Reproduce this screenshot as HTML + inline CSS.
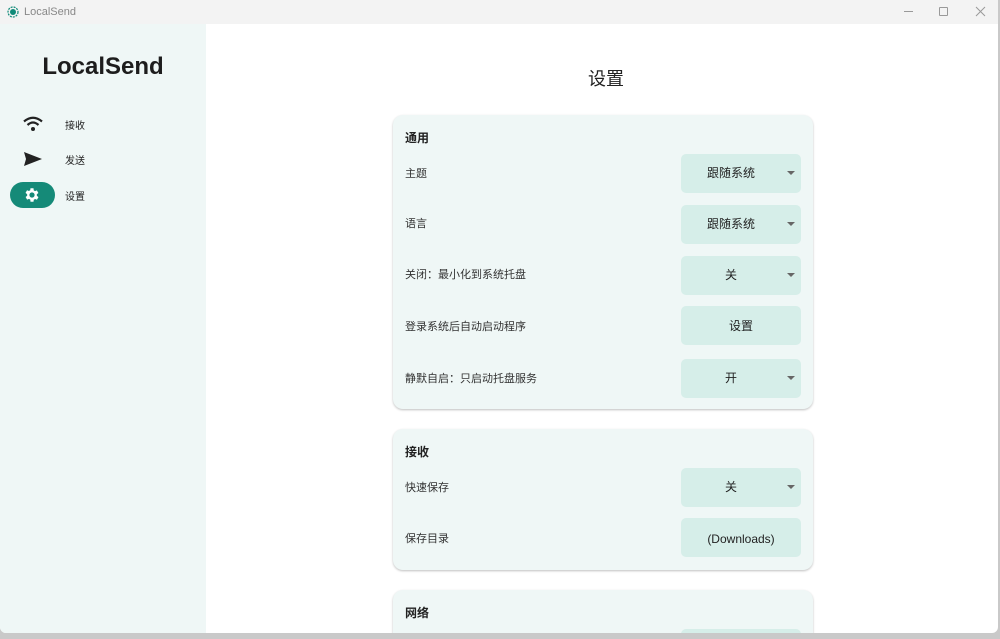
<!DOCTYPE html>
<html><head><meta charset="utf-8"><style>
*{margin:0;padding:0;box-sizing:border-box}
body{width:1000px;height:639px;overflow:hidden;background:#c9c9c9;font-family:"Liberation Sans","Noto Sans CJK SC",sans-serif;position:relative}
.win{position:absolute;left:0;top:0;width:998px;height:633px;background:#fff;border-radius:0 0 6px 6px;overflow:hidden}
.title{position:absolute;left:0;top:0;width:100%;height:24px;background:#f3f3f3;font-size:11px;color:#888}
.side{position:absolute;left:0;top:24px;width:206px;height:609px;background:#eff7f6}
.logo{position:absolute;left:0;width:206px;top:29px;text-align:center;font-size:24px;font-weight:bold;color:#1d1d1d}
.nav{position:absolute;left:65px;font-size:10px;color:#222}
.main{position:absolute;left:206px;top:24px;right:0;bottom:0}
h1{position:absolute;left:8px;right:0;top:41px;text-align:center;font-size:18px;font-weight:normal;color:#222}
.card{position:absolute;left:187px;width:420px;background:#eff7f6;border-radius:10px;box-shadow:0 1px 2px rgba(0,0,0,.25)}
.ct{position:absolute;left:12px;font-size:12px;color:#222;font-weight:bold}
.lb{position:absolute;left:12px;font-size:11px;color:#333}
.bt{position:absolute;left:288px;width:120px;height:39px;background:#d6eee9;border-radius:5px;font-size:12px;color:#222;line-height:39px;text-align:center}
.dd{text-align:left;padding-left:0}
.dd span{position:absolute;left:0;width:100px;text-align:center}
.dd i{position:absolute;right:6px;top:17px;border-left:4px solid transparent;border-right:4px solid transparent;border-top:4px solid #666}
</style></head><body>
<div class="win">
<div class="title">
<svg style="position:absolute;left:7px;top:6px" width="12" height="12"><circle cx="6" cy="6" r="5" fill="none" stroke="#0f8a78" stroke-width="1.2" stroke-dasharray="2 1"/><circle cx="6" cy="6" r="3" fill="#0f8a78"/></svg>
<span style="position:absolute;left:24px;top:6px">LocalSend</span>
<div style="position:absolute;left:904px;top:11px;width:9px;height:1px;background:#999"></div>
<div style="position:absolute;left:939px;top:7px;width:9px;height:9px;border:1px solid #999;border-radius:1px"></div>
<svg style="position:absolute;left:975px;top:6px" width="11" height="11"><path d="M1 1L10 10M10 1L1 10" stroke="#999" stroke-width="1"/></svg>
</div>
<div class="side">
<div class="logo">LocalSend</div>
<svg style="position:absolute;left:23px;top:92px" width="20" height="16" viewBox="0 0 20 16"><path d="M1 5.5Q10-2 19 5.5" stroke="#222" stroke-width="2.2" fill="none"/><path d="M4.5 9Q10 4 15.5 9" stroke="#222" stroke-width="2.2" fill="none"/><circle cx="10" cy="13" r="2" fill="#222"/></svg>
<div class="nav" style="top:93px">接收</div>
<svg style="position:absolute;left:23px;top:127px" width="20" height="16" viewBox="0 0 20 16"><path d="M1 1L19 8L1 15L3 8Z" fill="#222"/></svg>
<div class="nav" style="top:128px">发送</div>
<div style="position:absolute;left:10px;top:158px;width:45px;height:26px;background:#158a78;border-radius:13px"></div>
<svg style="position:absolute;left:23px;top:162px" width="18" height="18" viewBox="0 0 24 24"><path fill="#fff" d="M19.4 13a7.5 7.5 0 0 0 0-2l2.1-1.6-2-3.5-2.5 1a7 7 0 0 0-1.7-1L15 3h-4l-.4 2.7a7 7 0 0 0-1.7 1l-2.5-1-2 3.5L6.6 11a7.5 7.5 0 0 0 0 2l-2.1 1.6 2 3.5 2.5-1a7 7 0 0 0 1.7 1L11 21h4l.4-2.7a7 7 0 0 0 1.7-1l2.5 1 2-3.5zM13 15.5A3.5 3.5 0 1 1 13 8.5a3.5 3.5 0 0 1 0 7z" transform="translate(-1 0)"/></svg>
<div class="nav" style="top:164px">设置</div>
</div>
<div class="main">
<h1>设置</h1>
<div class="card" style="top:91px;height:294px">
<div class="ct" style="top:14px">通用</div>
<div class="lb" style="top:50px">主题</div><div class="bt dd" style="top:39px"><span>跟随系统</span><i></i></div>
<div class="lb" style="top:100px">语言</div><div class="bt dd" style="top:90px"><span>跟随系统</span><i></i></div>
<div class="lb" style="top:151px">关闭：最小化到系统托盘</div><div class="bt dd" style="top:141px"><span>关</span><i></i></div>
<div class="lb" style="top:203px">登录系统后自动启动程序</div><div class="bt" style="top:191px;line-height:41px">设置</div>
<div class="lb" style="top:255px">静默自启：只启动托盘服务</div><div class="bt dd" style="top:244px"><span>开</span><i></i></div>
</div>
<div class="card" style="top:405px;height:141px">
<div class="ct" style="top:14px">接收</div>
<div class="lb" style="top:50px">快速保存</div><div class="bt dd" style="top:39px"><span>关</span><i></i></div>
<div class="lb" style="top:101px">保存目录</div><div class="bt" style="top:89px;line-height:42px">(Downloads)</div>
</div>
<div class="card" style="top:566px;height:80px">
<div class="ct" style="top:14px">网络</div>
<div class="bt" style="top:39px"></div>
</div>
</div>
</div>
</body></html>
